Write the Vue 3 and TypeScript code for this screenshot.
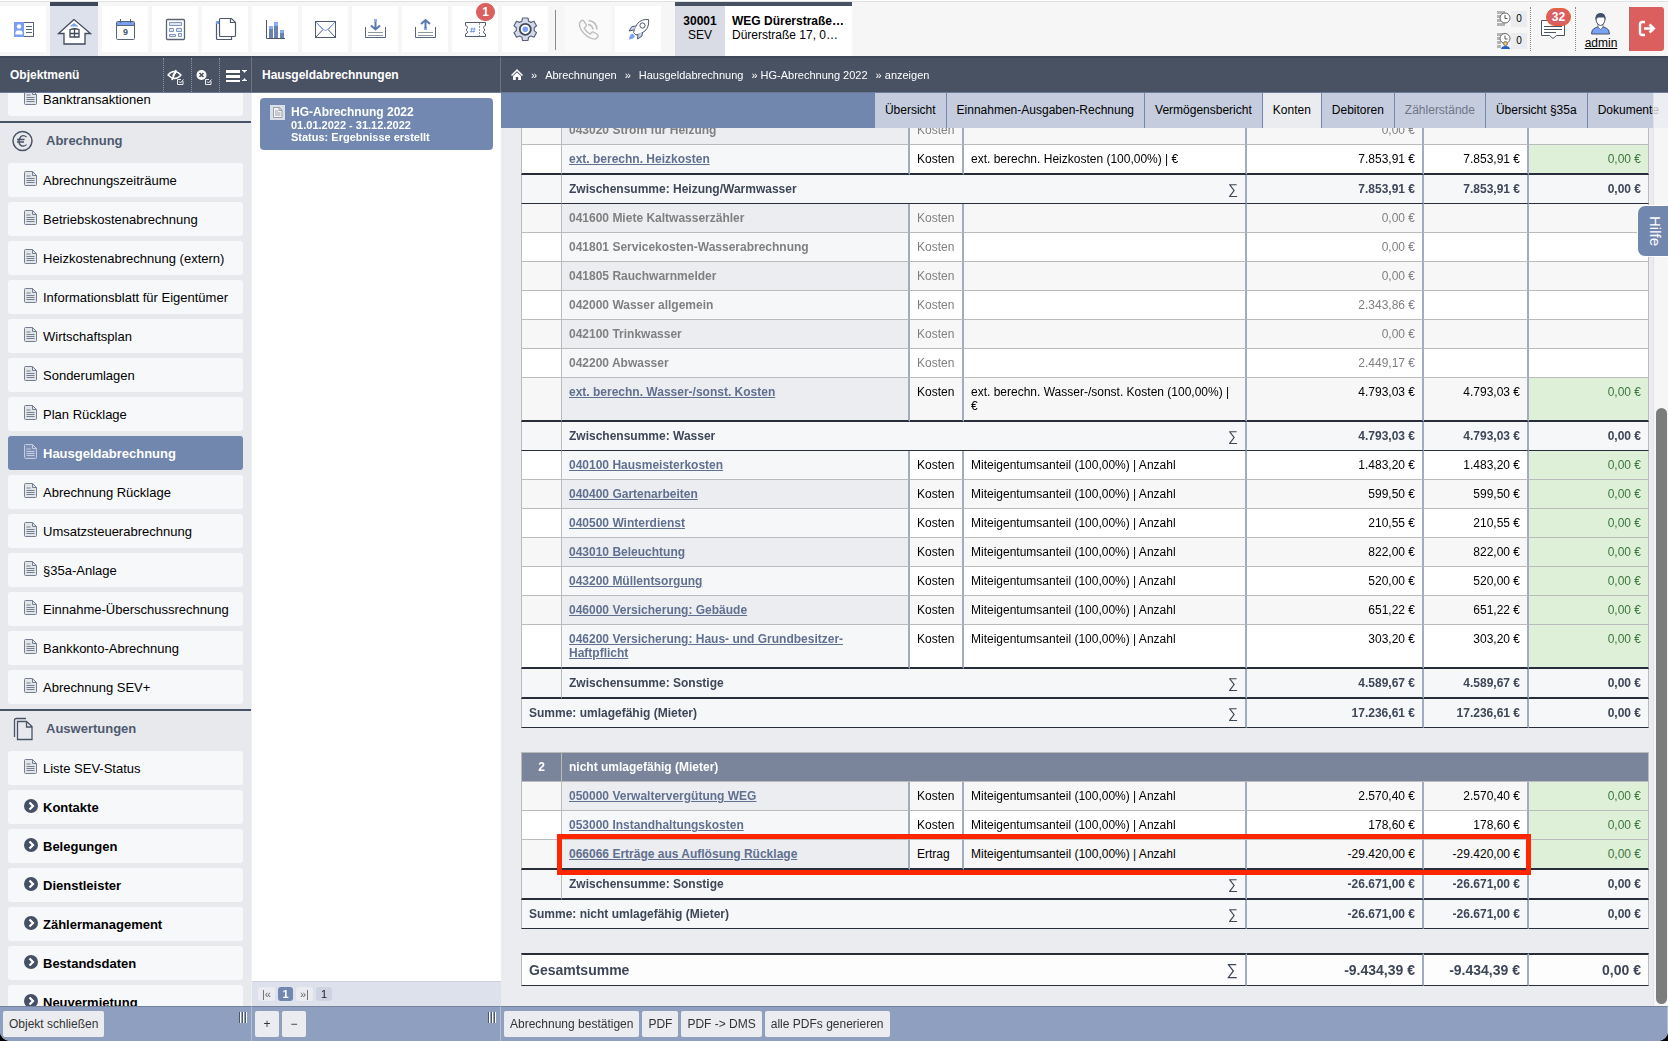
<script setup lang="ts">
import { onMounted, ref } from 'vue'

interface Account {
  name: string
  kind: string
  key?: string
  actual: string
  share?: string
  diff?: string
  marked?: boolean
}

interface Block {
  title: string
  rows: Account[]
  total: string
}

interface Group {
  no: string
  title: string
  showHead: boolean
  blocks: Block[]
  total: string
}

const mea = 'Miteigentumsanteil (100,00%) | Anzahl'

function muted(name: string, actual: string): Account {
  return { name, kind: 'Kosten', actual }
}

function entry(name: string, amount: string, key = mea, kind = 'Kosten', marked = false): Account {
  return { name, kind, key, actual: amount, share: amount, diff: '0,00 €', marked }
}

const groups: Group[] = [
  {
    no: '1',
    title: 'umlagefähig (Mieter)',
    showHead: false,
    total: '17.236,61 €',
    blocks: [
      {
        title: 'Heizung/Warmwasser',
        total: '7.853,91 €',
        rows: [
          muted('043020 Strom für Heizung', '0,00 €'),
          entry('ext. berechn. Heizkosten', '7.853,91 €', 'ext. berechn. Heizkosten (100,00%) | €'),
        ],
      },
      {
        title: 'Wasser',
        total: '4.793,03 €',
        rows: [
          muted('041600 Miete Kaltwasserzähler', '0,00 €'),
          muted('041801 Servicekosten-Wasserabrechnung', '0,00 €'),
          muted('041805 Rauchwarnmelder', '0,00 €'),
          muted('042000 Wasser allgemein', '2.343,86 €'),
          muted('042100 Trinkwasser', '0,00 €'),
          muted('042200 Abwasser', '2.449,17 €'),
          entry('ext. berechn. Wasser-/sonst. Kosten', '4.793,03 €', 'ext. berechn. Wasser-/sonst. Kosten (100,00%) | €'),
        ],
      },
      {
        title: 'Sonstige',
        total: '4.589,67 €',
        rows: [
          entry('040100 Hausmeisterkosten', '1.483,20 €'),
          entry('040400 Gartenarbeiten', '599,50 €'),
          entry('040500 Winterdienst', '210,55 €'),
          entry('043010 Beleuchtung', '822,00 €'),
          entry('043200 Müllentsorgung', '520,00 €'),
          entry('046000 Versicherung: Gebäude', '651,22 €'),
          entry('046200 Versicherung: Haus- und Grundbesitzer-Haftpflicht', '303,20 €'),
        ],
      },
    ],
  },
  {
    no: '2',
    title: 'nicht umlagefähig (Mieter)',
    showHead: true,
    total: '-26.671,00 €',
    blocks: [
      {
        title: 'Sonstige',
        total: '-26.671,00 €',
        rows: [
          entry('050000 Verwaltervergütung WEG', '2.570,40 €'),
          entry('053000 Instandhaltungskosten', '178,60 €'),
          entry('066066 Erträge aus Auflösung Rücklage', '-29.420,00 €', mea, 'Ertrag', true),
        ],
      },
    ],
  },
]

// Shading alternates over all account rows of a group, across its blocks.
function shaded(group: Group, block: number, row: number): boolean {
  const before = group.blocks.slice(0, block).reduce((n, b) => n + b.rows.length, 0)
  return (before + row) % 2 === 0
}

const billing = [
  'Abrechnungszeiträume',
  'Betriebskostenabrechnung',
  'Heizkostenabrechnung (extern)',
  'Informationsblatt für Eigentümer',
  'Wirtschaftsplan',
  'Sonderumlagen',
  'Plan Rücklage',
  'Hausgeldabrechnung',
  'Abrechnung Rücklage',
  'Umsatzsteuerabrechnung',
  '§35a-Anlage',
  'Einnahme-Überschussrechnung',
  'Bankkonto-Abrechnung',
  'Abrechnung SEV+',
]

const sections = [
  { title: '', icon: '', docs: ['Banktransaktionen'], folders: [] as string[] },
  { title: 'Abrechnung', icon: 'euro', docs: billing, folders: [] as string[] },
  {
    title: 'Auswertungen',
    icon: 'docs',
    docs: ['Liste SEV-Status'],
    folders: ['Kontakte', 'Belegungen', 'Dienstleister', 'Zählermanagement', 'Bestandsdaten', 'Neuvermietung'],
  },
]
const activeItem = 'Hausgeldabrechnung'

const tabs = [
  'Übersicht',
  'Einnahmen-Ausgaben-Rechnung',
  'Vermögensbericht',
  'Konten',
  'Debitoren',
  'Zählerstände',
  'Übersicht §35a',
  'Dokumente',
]
const activeTab = ref('Konten')

const actions = ['Abrechnung bestätigen', 'PDF', 'PDF -> DMS', 'alle PDFs generieren']

const menu = ref<HTMLElement | null>(null)
const sheet = ref<HTMLElement | null>(null)

onMounted(() => {
  if (menu.value) menu.value.scrollTop = 11
  if (sheet.value) sheet.value.scrollTop = sheet.value.scrollHeight
})
</script>

<template>
  <div class="app">
    <header class="topbar">
      <nav class="tools" aria-label="Module">
        <button class="tool" aria-label="Kontakte">
          <svg width="46" height="46" viewBox="0 0 46 46" fill="none">
            <rect x="14.5" y="16.5" width="19" height="14" fill="#fff" stroke="#5a6477" />
            <rect x="14" y="16" width="10" height="15" fill="#7b9ff0" />
            <circle cx="19" cy="20.500" r="2.200" fill="#fff" />
            <path d="M15.500 28.500v-2q0-2 2-2h3q2 0 2 2v2z" fill="#fff" />
            <path d="M26 20.500h6M26 23.500h6M26 26.500h6" stroke="#5a6477" />
          </svg>
        </button>
        <button class="tool current" aria-label="Objekte">
          <svg width="48" height="46" viewBox="0 0 48 46" fill="none" stroke="#3f495b" stroke-width="1.300">
            <path d="M24 13.500 8.500 27.500H14V38h21V27.500h5.500z" fill="#fff" />
            <path d="M24 17l-4.500 3.500h9z" fill="#7b9ff0" stroke="none" />
            <path d="M20 23.500q4.500-1.500 9 0V31h-9zM24.500 23v8M20 27.500h9" />
          </svg>
        </button>
        <button class="tool" aria-label="Kalender">
          <svg width="46" height="46" viewBox="0 0 46 46" fill="none" stroke="#5a6477">
            <rect x="14.500" y="15.500" width="18" height="18" rx="1" fill="#fff" />
            <path d="M15 16h17v3H15z" fill="#7b9ff0" stroke="none" />
            <path d="M14.500 19.500h18M18.500 13v4M28.500 13v4" />
            <text x="23.500" y="29" text-anchor="middle" font-size="9" font-weight="700" fill="#4a5467" stroke="none">9</text>
          </svg>
        </button>
        <button class="tool" aria-label="Rechner">
          <svg width="46" height="46" viewBox="0 0 46 46" fill="none" stroke="#5a6477">
            <rect x="14.500" y="13.500" width="18" height="20" rx="1" stroke-width="1.300" />
            <path d="M17.500 16.500h12v3h-12zM17.500 22.500h4v3h-4zM24.500 22.500h5v3h-5zM17.500 28.500h6v2h-6zM26.500 27.500h3v3h-3z" fill="#dfe5f2" stroke="#8397be" />
          </svg>
        </button>
        <button class="tool" aria-label="Dokumente">
          <svg width="46" height="46" viewBox="0 0 46 46" fill="none" stroke="#4f596c" stroke-width="1.200">
            <path d="M14.500 15.500v17q0 1 1 1h14v-3" fill="#fff" />
            <path d="M14 15h4v3h-4z" fill="#7b9ff0" stroke="none" />
            <path d="M17.500 13.500q0-1 1-1h11l4 4v13q0 1-1 1h-14q-1 0-1-1z" fill="#fff" />
            <path d="M28.500 12.500v4h5" />
          </svg>
        </button>
        <button class="tool" aria-label="Statistik">
          <svg width="46" height="46" viewBox="0 0 46 46" fill="none">
            <path d="M14.500 14v18.500H33" stroke="#4f596c" />
            <path d="M17 22h4v10h-4zM22 19h4v13h-4zM28 27h4v5h-4z" fill="#6b82ad" />
            <path d="M17 20h4v3h-4zM22 16h4v4h-4zM28 24h4v3h-4z" fill="#8aaaf5" />
          </svg>
        </button>
        <button class="tool" aria-label="E-Mail">
          <svg width="46" height="46" viewBox="0 0 46 46" fill="none" stroke="#4f596c">
            <rect x="13.500" y="15.500" width="20" height="16" fill="#fff" />
            <path d="M13.500 15.500l7.500 8-7.500 8M33.500 15.500l-7.500 8 7.500 8" />
            <path d="M14 16l8 8q1.500 1 3 0l8-8" stroke="#7b9ff0" />
          </svg>
        </button>
        <button class="tool" aria-label="Eingang">
          <svg width="46" height="46" viewBox="0 0 46 46" fill="none" stroke="#5a6477">
            <path d="M13.500 21v10.500h20V21" />
            <path d="M16 26.500h15M16 29.500h15" stroke="#8c96a8" />
            <path d="M23.500 13v3" stroke="#8aaaf5" stroke-width="3" />
            <path d="M23.500 16v7M19 19.500l4.500 4 4.500-4" stroke="#5b78b0" stroke-width="2" />
          </svg>
        </button>
        <button class="tool" aria-label="Ausgang">
          <svg width="46" height="46" viewBox="0 0 46 46" fill="none" stroke="#5a6477">
            <path d="M13.500 21v10.500h20V21" />
            <path d="M16 26.500h15M16 29.500h15" stroke="#8c96a8" />
            <path d="M23.500 21v3" stroke="#8aaaf5" stroke-width="3" />
            <path d="M23.500 22v-7M19 18l4.500-4 4.500 4" stroke="#5b78b0" stroke-width="2" />
          </svg>
        </button>
        <button class="tool" aria-label="Tickets">
          <svg width="46" height="46" viewBox="0 0 46 46" fill="none" stroke="#4f596c">
            <path d="M13.500 16.500h20v3q-2 .5-2 2 0 1 1 1.500v1.500q-1 .5-1 1.500 0 1.500 2 2v2.500h-20v-2.500q2-.5 2-2 0-1-1-1.500v-1.500q1-.5 1-1.500 0-1.500-2-2z" fill="#fff" />
            <path d="M27.500 17v13" stroke="#8c96a8" stroke-dasharray="2 1" />
            <path d="M20 21.500l-1 5M22.500 21.500l-1 5M18.500 23h5M18 25.500h5" stroke="#7b9ff0" />
          </svg>
          <span class="badge round">1</span>
        </button>
        <button class="tool" aria-label="Einstellungen">
          <svg width="46" height="46" viewBox="0 0 46 46" fill="none" stroke="#5a6477">
            <path
              d="M20.500 12h5.500l.6 3.200 2.400 1.200 3-1.200 2.500 4.600-2.300 2v2.800l2.300 2-2.500 4.600-3-1.200-2.400 1.200-.6 3.300h-5.500l-.6-3.300-2.400-1.200-3 1.200-2.500-4.600 2.300-2v-2.800l-2.300-2 2.500-4.600 3 1.200 2.400-1.200z"
              fill="#d5daea"
              stroke-width="1.200"
              stroke-linejoin="round"
            />
            <circle cx="23.300" cy="23.300" r="5.500" fill="#fff" stroke="#3f495b" stroke-width="1.800" />
            <circle cx="23.300" cy="23.300" r="2.800" fill="#7ba0f5" stroke="none" />
          </svg>
        </button>
        <span class="rule"></span>
        <button class="tool faded" aria-label="Telefon" disabled>
          <svg width="46" height="46" viewBox="0 0 46 46" fill="none" stroke="#bcbcbc" stroke-width="1.300">
            <path d="M16.500 14.500l-2 2.500q-.6 5 4.500 10.500 6 6 11.500 5.500l2.500-2.500q.5-1-.5-2l-4-2.500q-1-.5-1.800.5l-1.500 1.600q-4-2-6-6l1.700-1.600q.8-.8.300-1.800l-2.700-4q-1-1-2-.2z" />
            <path d="M23 18.500q4.500.5 5 5M23.500 14.500q8 .8 8.500 9" stroke-width="1.600" />
          </svg>
        </button>
        <button class="tool" aria-label="Schnellstart">
          <svg width="46" height="46" viewBox="0 0 46 46" fill="none" stroke="#4f596c">
            <path d="M33.500 13.500q-7-.5-11 4-3 4-4 9l2.500 2.500q5-.8 9-4 4.500-4.500 3.500-11.500z" fill="#fff" />
            <circle cx="27.500" cy="19.500" r="2.600" />
            <path d="M21 20l-4 .5-3 4.500 5-1M27.500 26l-.5 4-4.500 3 .5-5" fill="#c9d4ec" />
            <path d="M17.500 27.500q-3 1-3.500 6 5-.5 6-3.500z" fill="#7ba0f5" stroke="none" />
          </svg>
        </button>
      </nav>

      <div class="object">
        <div class="object-no"><b>30001</b><span>SEV</span></div>
        <div class="object-name"><b>WEG Dürerstraße…</b><span>Dürerstraße 17, 0…</span></div>
      </div>

      <div class="account">
        <div class="timers">
          <div class="timer">
            <svg width="14" height="16" viewBox="0 0 14 16" fill="none">
              <path d="M0 1.500h8M0 5.500h4M0 9.500h4M0 13.500h8" stroke="#b4b4b4" stroke-width="3" />
              <circle cx="8" cy="7" r="5" fill="#fff" stroke="#666" />
              <path d="M8 4v3.500h2.500" stroke="#555" />
            </svg>
            <span>0</span>
          </div>
          <div class="timer">
            <svg width="14" height="16" viewBox="0 0 14 16" fill="none">
              <path d="M0 1.500h8M0 5.500h4M0 9.500h4M0 13.500h4" stroke="#b4b4b4" stroke-width="3" />
              <circle cx="8" cy="5.500" r="5" fill="#fff" stroke="#666" />
              <path d="M8 2.500v3.500h2.500" stroke="#555" />
              <circle cx="8.500" cy="10.500" r="2" fill="#f0c46a" stroke="#777" />
              <path d="M4 16q.5-3 4.500-3t4.500 3z" fill="#1f62c4" />
            </svg>
            <span>0</span>
          </div>
        </div>
        <button class="slot messages" aria-label="Nachrichten">
          <svg width="26" height="22" viewBox="0 0 26 22" fill="none" stroke="#4a5467">
            <path d="M1.500 2.500h23v15h-8l-3.500 3-3.500-3h-8z" fill="#fff" />
            <path d="M4 8.500h18M4 11.500h18M4 14.500h12" />
          </svg>
          <span class="badge">32</span>
        </button>
        <a href="#admin" class="slot user">
          <svg width="22" height="22" viewBox="0 0 22 22" fill="none">
            <path d="M1.500 21q0-5 3.500-6l3.500-1.500h4L16 15q3.500 1 3.500 6z" fill="#7ba3f5" stroke="#4a5467" />
            <path d="M8 11v3l2.500 2.500L13 14v-3z" fill="#fff" stroke="#4a5467" stroke-width=".7" />
            <path d="M6 6q0-5 4.500-5t4.500 5q0 3-2 5.500-2.500 2-5 0Q6 9 6 6z" fill="#fff" stroke="#4a5467" />
            <path d="M5.500 7Q5 0 10.500 0t5 7l-1.500-2.500H8z" fill="#3f5068" />
          </svg>
          <span>admin</span>
        </a>
        <button class="logout" aria-label="Abmelden">
          <svg width="18" height="18" viewBox="0 0 18 18" fill="none" stroke="#fff">
            <path d="M7 2H4.500Q2 2 2 4.500v8Q2 15 4.500 15H7" stroke-width="2.400" />
            <path d="M6 8.500h9M11.500 4.500l4.200 4-4.200 4" stroke-width="2.600" />
          </svg>
        </button>
      </div>
    </header>

    <div class="columns">
      <aside class="column">
        <div class="bar">
          <h2>Objektmenü</h2>
          <div class="bar-tools">
            <button aria-label="Ausgeblendete zeigen">
              <svg width="18" height="18" viewBox="0 0 18 18" fill="none" stroke="#fff">
                <path d="M1 7q6-7 13 0-6 7-13 0z" stroke-width="1.300" />
                <path d="M9 2L5 12" stroke-width="1.800" />
                <path d="M9 5.500q-3-.5-3.500 2" />
                <path d="M16 13v3.500h-5.500v-5H14M12 13.500l1.500 1.500 3-3.500" stroke-width=".9" />
              </svg>
            </button>
            <button aria-label="Filter entfernen">
              <svg width="18" height="18" viewBox="0 0 18 18" fill="none">
                <circle cx="6.500" cy="7" r="5" fill="#fff" />
                <path d="M4.500 5l4 4M8.500 5l-4 4" stroke="#495263" stroke-width="1.600" />
                <path d="M16 13v3.500h-5.500v-5H14M12 13.500l1.500 1.500 3-3.500" stroke="#fff" stroke-width=".9" />
              </svg>
            </button>
            <button class="wide" aria-label="Menü einklappen">
              <svg width="22" height="14" viewBox="0 0 22 14" fill="#fff">
                <path d="M0 1h14v3H0zM0 6h14v3H0zM0 11h14v2H0zM16 1h5v1h-1l-1.500 2L17 2h-1zM16 12h5v-1h-1l-1.500-2-1.500 2h-1z" />
              </svg>
            </button>
          </div>
        </div>

        <nav ref="menu" class="menu" aria-label="Objektmenü">
          <section v-for="section in sections" :key="section.title" :class="{ titled: section.title }">
            <h3 v-if="section.title">
              <svg v-if="section.icon === 'euro'" width="24" height="24" viewBox="0 0 24 24" fill="none" stroke="#4a5467">
                <circle cx="11.500" cy="12" r="9.500" stroke-width="1.500" />
                <path d="M15.500 8q-3-2.500-5.500-.5-2.500 2.500-2 6 1 4 4.500 3.500 2 0 3-1.500M6 10.500h7.500M6 13h7" stroke-width="1.300" />
              </svg>
              <svg v-else width="24" height="24" viewBox="0 0 24 24" fill="none" stroke="#4a5467">
                <path d="M15 1.500H5.500q-2 0-2 2V20" stroke-width="1.300" />
                <path d="M6.500 4.500h9l5.500 5v13H6.500zM15.500 4.500v5.500h5.500" stroke-width="1.300" />
              </svg>
              {{ section.title }}
            </h3>
            <a v-for="item in section.docs" :key="item" href="#" class="item" :class="{ active: item === activeItem }">
              <svg width="13" height="15" viewBox="0 0 13 15" fill="none" stroke="currentColor">
                <path d="M.5 1.500q0-1 1-1h7l4 4v9q0 1-1 1h-10q-1 0-1-1z" fill="currentColor" fill-opacity=".15" />
                <path d="M8.500.5v4h4M2.500 5h4M2.500 7.500h8M2.500 9.500h8M2.500 11.500h8" />
              </svg>
              {{ item }}
            </a>
            <a v-for="item in section.folders" :key="item" href="#" class="item folder">
              <svg width="14" height="14" viewBox="0 0 14 14" fill="none">
                <circle cx="7" cy="7" r="7" fill="#465064" />
                <path d="M5.500 3.500L9 7l-3.500 3.500" stroke="#fff" stroke-width="2.200" />
              </svg>
              {{ item }}
            </a>
          </section>
        </nav>

        <footer class="foot">
          <button>Objekt schließen</button>
          <span class="grip"></span>
        </footer>
      </aside>

      <section class="column">
        <div class="bar"><h2>Hausgeldabrechnungen</h2></div>
        <div class="list">
          <a href="#" class="card">
            <svg width="15" height="15" viewBox="0 0 15 15" fill="none">
              <rect width="15" height="15" fill="#d9dee9" />
              <path d="M3.500 2.500h6l2.500 2.500v7.500H3.500zM9 2.500V5.500h3M5 6h3M5 8h5.500M5 10h5.500" stroke="#9a9fa8" fill="#f4f4f4" />
            </svg>
            <span class="card-text">
              <b>HG-Abrechnung 2022</b>
              <small>01.01.2022 - 31.12.2022</small>
              <small>Status: Ergebnisse erstellt</small>
            </span>
          </a>
        </div>
        <div class="pager">
          <button>|«</button>
          <button class="page">1</button>
          <button>»|</button>
          <span>1</span>
        </div>
        <footer class="foot">
          <button class="small">+</button>
          <button class="small">−</button>
          <span class="grip"></span>
        </footer>
      </section>

      <main class="column">
        <nav class="bar crumbs" aria-label="Brotkrumen">
          <a href="#" aria-label="Start">
            <svg width="12" height="12" viewBox="0 0 12 12" fill="#fff">
              <path d="M6 0l6 6-1 1-5-4.700L1 7 0 6zM2 7l4-3.500L10 7v4H7.200V8H4.800v3H2z" />
            </svg>
          </a>
          <span>»</span>
          <a href="#">Abrechnungen</a>
          <span>»</span>
          <a href="#">Hausgeldabrechnung</a>
          <a href="#">» HG-Abrechnung 2022</a>
          <span>» anzeigen</span>
        </nav>

        <div class="stage">
          <div class="tabs" role="tablist">
            <button
              v-for="tab in tabs"
              :key="tab"
              role="tab"
              :aria-selected="tab === activeTab"
              :class="{ active: tab === activeTab }"
              :disabled="tab === 'Zählerstände'"
              @click="activeTab = tab"
            >
              {{ tab }}
            </button>
          </div>

          <div ref="sheet" class="sheet">
            <table v-for="group in groups" :key="group.no" :class="{ headed: group.showHead }">
              <colgroup>
                <col class="c-no" /><col class="c-name" /><col class="c-kind" /><col />
                <col class="c-actual" /><col class="c-share" /><col class="c-diff" />
              </colgroup>
              <thead v-if="group.showHead">
                <tr>
                  <th class="no">{{ group.no }}</th>
                  <th colspan="6" class="title">{{ group.title }}</th>
                </tr>
              </thead>
              <tbody v-for="(block, b) in group.blocks" :key="block.title">
                <tr
                  v-for="(row, r) in block.rows"
                  :key="row.name"
                  :class="{ shaded: shaded(group, b, r), muted: !row.key, closing: r === block.rows.length - 1, marked: row.marked }"
                >
                  <td class="no"></td>
                  <td class="name thick">
                    <a v-if="row.key" href="#">{{ row.name }}</a>
                    <template v-else>{{ row.name }}</template>
                    <span v-if="row.marked" class="marker"></span>
                  </td>
                  <td class="thick">{{ row.kind }}</td>
                  <td class="thick">{{ row.key }}</td>
                  <td class="num thick">{{ row.actual }}</td>
                  <td class="num thick">{{ row.share }}</td>
                  <td class="num" :class="{ even: row.diff }">{{ row.diff }}</td>
                </tr>
                <tr class="sum" :class="{ closing: b === group.blocks.length - 1 }">
                  <td class="no"></td>
                  <td colspan="3" class="thick"><div class="label">Zwischensumme: {{ block.title }}<i>∑</i></div></td>
                  <td class="num thick">{{ block.total }}</td>
                  <td class="num thick">{{ block.total }}</td>
                  <td class="num">0,00 €</td>
                </tr>
              </tbody>
              <tfoot>
                <tr class="sum">
                  <td colspan="4" class="first thick"><div class="label">Summe: {{ group.title }}<i>∑</i></div></td>
                  <td class="num thick">{{ group.total }}</td>
                  <td class="num thick">{{ group.total }}</td>
                  <td class="num">0,00 €</td>
                </tr>
              </tfoot>
            </table>

            <table class="grand">
              <colgroup>
                <col class="c-no" /><col class="c-name" /><col class="c-kind" /><col />
                <col class="c-actual" /><col class="c-share" /><col class="c-diff" />
              </colgroup>
              <tbody>
                <tr class="sum">
                  <td colspan="4" class="first thick"><div class="label">Gesamtsumme<i>∑</i></div></td>
                  <td class="num thick">-9.434,39 €</td>
                  <td class="num thick">-9.434,39 €</td>
                  <td class="num">0,00 €</td>
                </tr>
              </tbody>
            </table>
          </div>

          <div class="track"><div class="thumb"></div></div>
          <button class="help">Hilfe</button>
        </div>

        <footer class="foot">
          <button v-for="action in actions" :key="action">{{ action }}</button>
        </footer>
      </main>
    </div>
  </div>
</template>

<style>
body {
  background: #000;
}
</style>

<style scoped>
.app,
.app * {
  box-sizing: border-box;
}

.app {
  display: flex;
  flex-direction: column;
  height: 100vh;
  overflow: hidden;
  border-radius: 0 0 10px 10px;
  background: #ebecf0;
  color: #000;
  font: 12px/14px 'Liberation Sans', Arial, sans-serif;
}

button {
  border: 0;
  padding: 0;
  background: none;
  color: inherit;
  font: inherit;
}

a {
  color: inherit;
  text-decoration: none;
}

svg {
  display: block;
  flex: none;
}

/* top bar */
.topbar {
  display: flex;
  flex: none;
  height: 56px;
  border-top: 1px solid #fff;
  box-shadow: inset 0 1px #dfe2e2;
  background: #f6f6f6;
}

.tools {
  display: flex;
  gap: 4px;
}

.tool {
  position: relative;
  width: 46px;
  height: 46px;
  margin-top: 5px;
  background: #fff;
}

.tool.current {
  width: 48px;
  height: 54px;
  margin-top: 1px;
  padding-bottom: 4px;
  border-top: 4px solid #3f4858;
  background: #dde1ec;
}

.tool.faded {
  background: #fafafa;
}

.rule {
  width: 1px;
  height: 40px;
  margin: 9px 5px 0 3px;
  background: #8b8b8b;
}

.badge {
  position: absolute;
  top: 1px;
  right: 1px;
  min-width: 25px;
  height: 18px;
  border: 1px solid #e8632f;
  border-radius: 9px;
  background: #dc5f5f;
  color: #fff;
  font-weight: 700;
  line-height: 16px;
  text-align: center;
}

.badge.round {
  top: -3px;
  right: 3px;
  min-width: 19px;
  border-color: #dc5f5f;
}

.object {
  display: flex;
  margin: 1px 0 0 14px;
  border-top: 4px solid #495263;
  background: #fff;
}

.object div {
  display: flex;
  flex-direction: column;
  padding-top: 8px;
}

.object-no {
  width: 50px;
  align-items: center;
  background: #d9dce5;
}

.object-name {
  width: 127px;
  padding-left: 7px;
}

.account {
  display: flex;
  gap: 3px;
  height: 44px;
  margin: 6px 4px 0 auto;
}

.timers {
  display: flex;
  flex-direction: column;
  gap: 6px;
  padding-top: 4px;
}

.timer {
  display: flex;
}

.timer span {
  width: 16px;
  height: 16px;
  background: #ebecef;
  font-size: 10px;
  line-height: 16px;
  text-align: center;
}

.slot {
  position: relative;
  display: flex;
  flex-direction: column;
  align-items: center;
  width: 42px;
  border-left: 1px dotted #888;
}

.messages {
  padding: 11px 0 0 2px;
}

.slot.user {
  width: 51px;
  padding-top: 6px;
}

.user span {
  margin-top: 1px;
  text-decoration: underline;
}

.logout {
  display: grid;
  place-items: center;
  width: 35px;
  border-left: 1px dotted #777;
  border-radius: 0 3px 3px 0;
  background: #dc5f5f;
}

/* columns */
.columns {
  display: grid;
  grid-template-columns: 252px 249px minmax(0, 1fr);
  flex: 1;
  min-height: 0;
}

.column {
  display: flex;
  flex-direction: column;
  min-width: 0;
  min-height: 0;
}

.bar {
  display: flex;
  flex: none;
  align-items: center;
  justify-content: space-between;
  height: 37px;
  padding-left: 10px;
  border-top: 2px solid #3f4758;
  border-right: 1px solid #6c7586;
  border-bottom: 1px solid #6b7a9b;
  background: #495263;
  color: #fff;
}

.bar h2 {
  margin: 0;
  font-size: 12px;
  line-height: 14px;
}

.bar-tools {
  display: flex;
  align-self: stretch;
}

.bar-tools button {
  display: grid;
  place-items: center;
  width: 28px;
  padding: 3px 3px 0 0;
  border-left: 1px dotted #8a93a3;
}

.bar-tools .wide {
  width: 32px;
  padding: 2px 0 0 2px;
}

.crumbs {
  justify-content: flex-start;
  gap: 8px;
  border-right: 0;
  font-size: 11px;
}

.foot {
  display: flex;
  flex: none;
  gap: 3px;
  height: 35px;
  padding: 4px 3px;
  border-top: 1px solid #76829c;
  border-right: 1px solid #b4bfd6;
  background: #8e9fc0;
}

.foot button {
  height: 26px;
  padding: 0 6px;
  border-radius: 2px;
  background: #ebecf0;
  color: #333;
}

.foot .small {
  width: 24px;
  padding: 0;
}

.grip {
  width: 9px;
  height: 11px;
  margin: 1px 0 0 auto;
  background: repeating-linear-gradient(90deg, #4e5563 0 1px, #fff 1px 2px, transparent 2px 3px);
}

/* left menu */
.menu {
  flex: 1;
  overflow-y: auto;
  scrollbar-width: none;
  border-right: 1px solid #eff0f3;
  background: #e8e9ed;
}

.titled {
  border-top: 2px solid #475569;
}

.menu h3 {
  display: flex;
  align-items: center;
  gap: 11px;
  height: 40px;
  margin: 0;
  padding: 0 0 4px 11px;
  color: #4f5a70;
  font-size: 13px;
}

.item {
  display: flex;
  align-items: center;
  gap: 6px;
  height: 34px;
  margin: 0 8px 5px;
  padding: 1px 0 0 16px;
  border-radius: 3px;
  background: #f7f8fa;
  font-size: 13px;
}

.item svg {
  margin-bottom: 4px;
  color: #757f90;
}

.item.active {
  background: #7287ae;
  color: #fff;
  font-weight: 700;
}

.item.active svg {
  color: #c3cce0;
}

.folder {
  gap: 5px;
  font-weight: 700;
}

/* statement list */
.list {
  flex: 1;
  padding: 5px 8px;
  background: #fff;
}

.card {
  display: flex;
  gap: 6px;
  padding: 7px 10px;
  border-radius: 4px;
  background: #7388b0;
  color: #fff;
}

.card-text {
  display: flex;
  flex-direction: column;
}

.card small {
  font-size: 11px;
  font-weight: 700;
  line-height: 12px;
}

.pager {
  display: flex;
  flex: none;
  gap: 3px;
  height: 25px;
  padding: 5px 6px;
  border-top: 1px solid #ccd2e0;
  background: #dde1ec;
  font-size: 11px;
}

.pager button,
.pager span {
  min-width: 15px;
  height: 14px;
  padding: 0 4px;
  border-radius: 3px;
  background: #ebecf2;
  color: #666;
  line-height: 14px;
}

.pager span {
  padding: 0 5px;
  background: #cdd3e2;
  color: #222;
}

.pager .page {
  background: #7287ae;
  color: #fff;
  font-weight: 700;
}

/* content */
.stage {
  position: relative;
  display: flex;
  flex: 1;
  flex-direction: column;
  min-height: 0;
}

.tabs {
  display: flex;
  flex: none;
  justify-content: flex-end;
  gap: 1px;
  height: 35px;
  background: #7287ae;
}

.tabs button {
  padding: 0 10px 2px;
  background: #c4ccde;
  white-space: nowrap;
}

.tabs button:last-child {
  padding-right: 9px;
}

.tabs button.active {
  background: #ebecf0;
}

.tabs button:disabled {
  color: #6f7787;
}

.sheet {
  display: flex;
  flex: 1;
  flex-direction: column;
  gap: 24px;
  min-height: 0;
  padding: 0 19px 20px 20px;
  overflow-y: auto;
  scrollbar-width: none;
}

table {
  flex: none;
  width: 100%;
  table-layout: fixed;
  border-collapse: separate;
  border-spacing: 0;
}

.headed {
  border-top: 1px solid #bbb;
}

.c-no {
  width: 41px;
}

.c-name {
  width: 348px;
}

.c-kind {
  width: 54px;
}

.c-actual {
  width: 177px;
}

.c-share {
  width: 105px;
}

.c-diff {
  width: 120px;
}

td,
th {
  padding: 7px;
  border-right: 1px solid #bbb;
  border-bottom: 1px solid #bbb;
  background: #fff;
  text-align: left;
  vertical-align: top;
}

th {
  background: #7a859c;
  color: #fff;
}

th.no {
  text-align: center;
}

.no,
.first {
  border-left: 1px solid #bbb;
}

.thick {
  border-right: 2px solid #a2acbf;
}

.num {
  text-align: right;
}

.name {
  background: #f6f7f9;
  font-weight: 700;
}

.name a {
  color: #60708f;
  text-decoration: underline;
}

.shaded td {
  background: #f7f7f7;
}

.shaded .name {
  background: #ecedf1;
}

.muted {
  color: #808080;
}

tr td.even {
  background: #dff0d8;
  color: #3c763d;
}

.sum td {
  border-bottom-color: #272e3a;
  background: #f5f7f9;
  color: #3e4757;
  font-weight: 700;
}

.closing td {
  border-bottom: 2px solid #272e3a;
}

.label {
  display: flex;
  justify-content: space-between;
}

.label i {
  font-size: 14px;
  font-style: normal;
  font-weight: 400;
}

.grand td {
  border-top: 2px solid #272e3a;
  background: #fdfdfd;
  font-size: 14px;
  line-height: 16px;
}

.grand .label i {
  font-size: 16px;
}

.marked {
  position: relative;
}

.marker {
  position: absolute;
  top: -6px;
  right: 118px;
  bottom: -5px;
  left: 36px;
  border: 5px solid #ff2600;
  pointer-events: none;
}

.track {
  position: absolute;
  top: 0;
  right: 0;
  bottom: 0;
  display: flex;
  flex-direction: column;
  width: 15px;
  padding: 0 1px 2px 2px;
  border-left: 1px solid #e2e3e8;
  background: rgb(250 250 250 / 75%);
}

.track::before {
  flex: 19;
  content: '';
}

.thumb {
  flex: 36;
  border-radius: 6px;
  background: #7b7d7d;
}

.help {
  position: absolute;
  top: 112px;
  right: 0;
  width: 31px;
  height: 52px;
  padding-left: 4px;
  border: 1px solid #fff;
  border-right: 0;
  border-radius: 8px 0 0 8px;
  background: #7287ae;
  color: #fff;
  font-size: 15px;
  text-align: center;
  writing-mode: vertical-rl;
}
</style>
